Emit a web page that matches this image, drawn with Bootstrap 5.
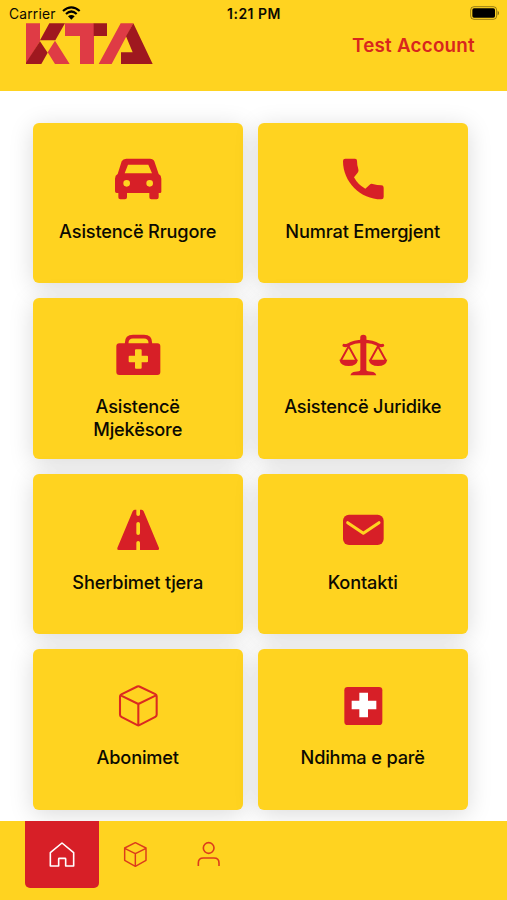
<!DOCTYPE html>
<html lang="sq">
<head>
<meta charset="utf-8">
<meta name="viewport" content="width=device-width, initial-scale=1">
<title>KTA</title>
<link rel="stylesheet" href="https://cdn.jsdelivr.net/npm/bootstrap@5.3.0/dist/css/bootstrap.min.css">
<style>
  :root { --kta-yellow: #ffd320; --kta-red: #d71f27; }
  body { font-family: Inter, "Liberation Sans", sans-serif; color: #0c0a02; height: 900px; }
  svg { display: block; flex: none; }
  .app-header { background: var(--kta-yellow); height: 91px; }
  .status-bar { height: 23px; font-size: 13.8px; line-height: 20px; padding: 4px 8px 0 9px; }
  .status-side { flex: 1 1 0; }
  .status-carrier { letter-spacing: .2px; }
  .status-time { font-weight: 600; font-size: 14px; letter-spacing: .5px; }
  .wifi { margin: 2px 0 0 6px; }
  .battery { margin-top: 2px; }
  .brand-row { padding: 0 32px 0 25px; }
  .account { color: #d8261d; font-size: 18.8px; font-weight: 600; line-height: 24px; margin-top: 11px; letter-spacing: .25px; }
  .app-main { padding: 31.9px 39.3px 0 32.7px; min-height: 0; }
  .tile-grid { display: grid; grid-template-columns: 1fr 1fr; grid-auto-rows: 160.6px; gap: 14.9px 15px; }
  .tile { background: var(--kta-yellow); border: 0; border-radius: 6px; box-shadow: 0 4px 24px rgba(0,0,0,.15); padding: 35.5px 20px 0; color: inherit; }
  .tile svg { width: 50px; height: 42px; fill: var(--kta-red); }
  .tile-label { font-size: 18.2px; font-weight: 500; line-height: 23.1px; margin-top: 19.4px; letter-spacing: -.17px; }
  .app-nav { background: var(--kta-yellow); height: 79.5px; padding-left: 25.3px; }
  .nav-tab { width: 73.3px; height: 67.3px; color: #dc3c1c; border-radius: 0 0 5px 5px; }
  .nav-tab.active { background: var(--kta-red); color: #fff; }
  .nav-tab svg { width: 28px; height: 28px; fill: none; stroke: currentColor; }
</style>
</head>
<body class="d-flex flex-column overflow-hidden bg-white">
<header class="app-header">
  <div class="status-bar d-flex">
    <div class="status-side d-flex">
      <span class="status-carrier">Carrier</span>
      <svg class="wifi" width="19" height="14" viewBox="0 0 57 42" fill="none" stroke="#000" stroke-width="6.5"><path d="M3 15Q28 -7 53 15M12 24Q28 9 44 24"/><path d="M28 41l-10-10q10-8 20 0z" fill="#000" stroke="none"/></svg>
    </div>
    <span class="status-time">1:21 PM</span>
    <div class="status-side d-flex justify-content-end">
      <svg class="battery" width="30" height="14" viewBox="0 0 90 42"><rect x="5" y="2" width="78" height="38" rx="10" fill="none" stroke="#000" stroke-opacity=".4" stroke-width="3"/><rect x="10" y="7" width="68" height="28" rx="5"/><path d="M86 14q4 2 4 7t-4 7z" opacity=".5"/></svg>
    </div>
  </div>
  <div class="brand-row d-flex justify-content-between">
    <svg width="129" height="42" viewBox="75 69 387 126" role="img" aria-label="KTA">
      <g fill="#df3b45">
        <path d="M78 70h42v54l-42 68zM165 122l44 70h-44l-22-35zM195 70h87v122h-42v-84h-45zM362 70h38l-65 122h-39z"/>
      </g>
      <g fill="#9f181f">
        <path d="M120 121l28-51h47l-29 51zM78 192v-4l42-64 23 34-19 34zM281 70h40v38h-40zM400 70l58 122h-95v-35h35l-20-48z"/>
      </g>
    </svg>
    <div class="account">Test Account</div>
  </div>
</header>

<main class="app-main flex-grow-1">
  <div class="tile-grid">
    <a class="tile card align-items-center text-center text-decoration-none">
      <svg viewBox="0 0 150 126"><path fill-rule="evenodd" d="M40 2h71q10 0 13 8l13 38q8 4 8 14v39q0 4-4 4h-4v13q0 6-6 6h-16q-6 0-6-6v-13H42v13q0 6-6 6H22q-6 0-6-6v-13h-5q-5 0-5-5V62q0-10 8-14L26 10q4-8 14-8zM45 20L35 46h82L106 20zM41 66a10 10 0 100 20 10 10 0 000-20zM110 66a10 10 0 100 20 10 10 0 000-20z"/></svg>
      <span class="tile-label">Asistencë Rrugore</span>
    </a>
    <a class="tile card align-items-center text-center text-decoration-none">
      <svg viewBox="0 0 150 126"><path d="M15 9q0-7 7-7h29q6 0 6 6 0 14 4 26 2 5-2 10L48 58Q60 81 82 92l13-12q4-4 9-2 14 4 26 4 7 0 7 7v28q0 7-7 7C67 124 15 72 15 9z"/></svg>
      <span class="tile-label">Numrat Emergjent</span>
    </a>
    <a class="tile card align-items-center text-center text-decoration-none">
      <svg viewBox="0 0 150 126"><path d="M41 32v-5q0-19 19-19h33q19 0 19 19v5" fill="none" stroke="#d71f27" stroke-width="11"/><path fill-rule="evenodd" d="M19 28h114q9 0 9 9v77q0 9-9 9H19q-9 0-9-9V37q0-9 9-9zm50 18q-3 0-3 3v16H50q-3 0-3 3v14q0 3 3 3h16v16q0 3 3 3h14q3 0 3-3V85h16q3 0 3-3V68q0-3-3-3H86V49q0-3-3-3z"/></svg>
      <span class="tile-label">Asistencë<br>Mjekësore</span>
    </a>
    <a class="tile card align-items-center text-center text-decoration-none">
      <svg viewBox="0 0 150 126"><circle cx="76" cy="12" r="9.5"/><path d="M67 15h18v92q0 4 5 5l16 2q7 2 9 10H37q2-8 9-10l16-2q5-1 5-5z"/><path d="M18 34q4 2 12-1 17-11 46-11t46 11q8 3 12 1" fill="none" stroke="#d71f27" stroke-width="9.5" stroke-linecap="round"/><g fill="none" stroke="#d71f27" stroke-width="6"><path d="M9 79l23-42 23 42M97 79l23-42 23 42"/></g><path d="M4 77h56q-4 19-28 19T4 77zM92 77h56q-4 19-28 19T92 77z"/></svg>
      <span class="tile-label">Asistencë Juridike</span>
    </a>
    <a class="tile card align-items-center text-center text-decoration-none">
      <svg viewBox="0 0 150 126"><path fill-rule="evenodd" d="M65 2h5v14q0 5 5.500 5t5.500-5V2h5q4 0 6 5l46 110q2 6-4 6H81v-22q0-5-5.500-5t-5.500 5v22H17q-6 0-4-6L59 7q2-5 6-5zM75.500 39q-5.500 0-5.500 5v29q0 5 5.500 5t5.500-5V44q0-5-5.500-5z"/></svg>
      <span class="tile-label">Sherbimet tjera</span>
    </a>
    <a class="tile card align-items-center text-center text-decoration-none">
      <svg viewBox="0 0 150 126"><rect x="15" y="17" width="122" height="91" rx="18"/><path d="M29 41l47 32 47-32" fill="none" stroke="#ffd320" stroke-width="9" stroke-linecap="round" stroke-linejoin="round"/></svg>
      <span class="tile-label">Kontakti</span>
    </a>
    <a class="tile card align-items-center text-center text-decoration-none">
      <svg viewBox="0 0 150 126"><path d="M73 4.500q3-1.500 6 0l48 23q4 2 4 6v56q0 4-4 6l-48 25q-3 1.500-6 0L25 95.500q-4-2-4-6V34q0-4 4-6zM23 31l53 26 53-26M76 57v62" fill="none" stroke="#db2a21" stroke-width="6.200" stroke-linejoin="round"/></svg>
      <span class="tile-label">Abonimet</span>
    </a>
    <a class="tile card align-items-center text-center text-decoration-none">
      <svg viewBox="0 0 150 126"><rect x="19" y="6" width="114" height="114" rx="10"/><path fill="#fff" d="M64 23h26v24h25v26H90v24H64V73H41V47h23z"/></svg>
      <span class="tile-label">Ndihma e parë</span>
    </a>
  </div>
</main>

<nav class="app-nav d-flex position-relative">
  <a class="nav-tab active d-flex align-items-center justify-content-center">
    <svg viewBox="0 0 84 84" stroke-width="4.800" stroke-linejoin="round"><path d="M7 38L42 9l35 29v40H53V57q0-2-2-2H34q-2 0-2 2v21H7z"/></svg>
  </a>
  <a class="nav-tab d-flex align-items-center justify-content-center">
    <svg viewBox="0 0 84 84" stroke-width="4.400" stroke-linejoin="round"><path d="M43 8l32 16v37L43 79 11 61V24zM11 25l32 16 32-16M43 41v38"/></svg>
  </a>
  <a class="nav-tab d-flex align-items-center justify-content-center">
    <svg viewBox="0 0 84 84" stroke-width="4.800"><circle cx="41" cy="24" r="16"/><path d="M10 78V69q0-15 15-15h32q15 0 15 15v9"/></svg>
  </a>
</nav>
<script src="https://cdn.jsdelivr.net/npm/bootstrap@5.3.0/dist/js/bootstrap.bundle.min.js"></script>
</body>
</html>
